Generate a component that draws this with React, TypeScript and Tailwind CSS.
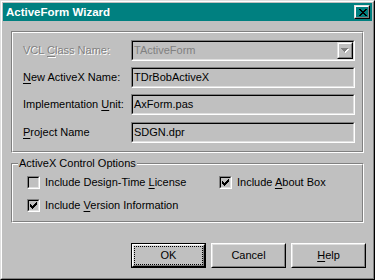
import React from "react";

function Sunken({ className = "", innerClassName = "", children }: { className?: string; innerClassName?: string; children?: React.ReactNode }) {
  return (
    <div className={`border border-t-[#808080] border-l-[#808080] border-b-white border-r-white ${className}`}>
      <div className={`h-full w-full border border-t-black border-l-black border-b-[#dfdfdf] border-r-[#dfdfdf] ${innerClassName}`}>{children}</div>
    </div>
  );
}

function Etched({ className = "", innerClassName = "", children }: { className?: string; innerClassName?: string; children?: React.ReactNode }) {
  return (
    <div className={`border border-t-[#808080] border-l-[#808080] border-b-white border-r-white ${className}`}>
      <div className={`h-full w-full border border-t-white border-l-white border-b-[#808080] border-r-[#808080] ${innerClassName}`}>{children}</div>
    </div>
  );
}

function U({ children }: { children: React.ReactNode }) {
  return <span className="underline decoration-1 underline-offset-[2px]">{children}</span>;
}

function Check() {
  const rows = ["......#", ".....##", "#...###", "##.###.", "#####..", ".###...", "..#...."];
  return (
    <svg width="7" height="7" viewBox="0 0 7 7" shapeRendering="crispEdges">
      {rows.flatMap((r, y) =>
        r.split("").map((c, x) => (c === "#" ? <rect key={`${x}-${y}`} x={x} y={y} width="1" height="1" fill="#000" /> : null))
      )}
    </svg>
  );
}

function CloseGlyph() {
  const rows = ["##....##", ".##..##.", "..####..", "...##...", "..####..", ".##..##.", "##....##"];
  return (
    <svg width="8" height="7" viewBox="0 0 8 7" shapeRendering="crispEdges">
      {rows.flatMap((r, y) =>
        r.split("").map((c, x) => (c === "#" ? <rect key={`${x}-${y}`} x={x} y={y} width="1" height="1" fill="#000" /> : null))
      )}
    </svg>
  );
}

function CheckBox({ checked, children }: { checked?: boolean; children: React.ReactNode }) {
  return (
    <div className="flex h-[13px] items-center gap-[5px]">
      <Sunken className="h-[13px] w-[13px] shrink-0" innerClassName="bg-[#c0c0c0] p-px">
        {checked ? <Check /> : null}
      </Sunken>
      <span className="whitespace-nowrap leading-[13px] text-black">{children}</span>
    </div>
  );
}

function Button({ def, children }: { def?: boolean; children: React.ReactNode }) {
  const bevel = (
    <div className="h-full w-full border border-t-white border-l-white border-b-black border-r-black">
      <div className="h-full w-full border border-t-[#dfdfdf] border-l-[#dfdfdf] border-b-[#808080] border-r-[#808080] p-px">
        <div className={`flex h-full w-full items-center justify-center border ${def ? "border-dotted border-black" : "border-transparent"}`}>
          <span className="leading-[13px]">{children}</span>
        </div>
      </div>
    </div>
  );
  return (
    <div className={`h-[25px] w-[75px] ${def ? "border border-black" : ""}`}>
      {def ? (
        <div className="h-full w-full border border-t-white border-l-white border-b-black border-r-black">
          <div className="h-full w-full border border-t-[#dfdfdf] border-l-[#dfdfdf] border-b-[#808080] border-r-[#808080]">
            <div className="flex h-full w-full items-center justify-center border border-dotted border-black">
              <span className="leading-[13px]">{children}</span>
            </div>
          </div>
        </div>
      ) : (
        bevel
      )}
    </div>
  );
}

function Row({ label, disabled, children, className = "" }: { label: React.ReactNode; disabled?: boolean; children: React.ReactNode; className?: string }) {
  return (
    <div className={`flex h-[21px] items-center ${className}`}>
      <div
        className={`w-[108px] shrink-0 whitespace-nowrap leading-[13px] ${
          disabled ? "text-[#808080] [text-shadow:1px_1px_0_#ffffff]" : "text-black"
        }`}
      >
        {label}
      </div>
      {children}
    </div>
  );
}

function Edit({ value }: { value: string }) {
  return (
    <Sunken className="h-[21px] w-[224px]" innerClassName="bg-[#c0c0c0] flex items-center pl-px">
      <span className="leading-[13px] text-black">{value}</span>
    </Sunken>
  );
}

export default function App() {
  return (
    <div className="h-[280px] w-[375px] select-none border border-t-[#dfdfdf] border-l-[#dfdfdf] border-b-black border-r-black bg-[#c0c0c0] font-['Liberation_Sans',Arial,sans-serif] text-[11px] text-black">
      <div className="flex h-full w-full flex-col border border-t-white border-l-white border-b-[#808080] border-r-[#808080] p-px">
        {/* Title bar */}
        <div className="flex h-[18px] shrink-0 items-center justify-between bg-[#008080] pl-[3px] pr-[2px]">
          <span className="text-[11.5px] font-bold leading-[14px] text-white">ActiveForm Wizard</span>
          <div className="h-[14px] w-[16px] border border-t-[#dfdfdf] border-l-[#dfdfdf] border-b-black border-r-black">
            <div className="flex h-full w-full items-center justify-center border border-t-white border-l-white border-b-[#808080] border-r-[#808080] pl-px">
              <CloseGlyph />
            </div>
          </div>
        </div>

        {/* Client */}
        <div className="flex flex-col px-[8px] pt-[10px]">
          <Etched className="h-[122px]" innerClassName="flex flex-col pl-[10px] pt-[7px]">
            <Row
              disabled
              label={
                <>
                  VCL <U>C</U>lass Name:
                </>
              }
            >
              <Sunken className="h-[21px] w-[224px]" innerClassName="bg-[#c0c0c0] flex items-stretch">
                <div className="flex flex-1 items-center pl-px">
                  <span className="leading-[13px] text-[#808080]">TActiveForm</span>
                </div>
                <div className="w-[16px] border border-t-[#dfdfdf] border-l-[#dfdfdf] border-b-black border-r-black">
                  <div className="flex h-full w-full items-center justify-center border border-t-white border-l-white border-b-[#808080] border-r-[#808080]">
                    <svg width="8" height="5" viewBox="0 0 8 5" shapeRendering="crispEdges">
                      <path d="M1 1h7v1H1zM2 2h5v1H2zM3 3h3v1H3zM4 4h1v1H4z" fill="#ffffff" />
                      <path d="M0 0h7v1H0zM1 1h5v1H1zM2 2h3v1H2zM3 3h1v1H3z" fill="#808080" />
                    </svg>
                  </div>
                </div>
              </Sunken>
            </Row>
            <Row
              className="mt-[6px]"
              label={
                <>
                  <U>N</U>ew ActiveX Name:
                </>
              }
            >
              <Edit value="TDrBobActiveX" />
            </Row>
            <Row
              className="mt-[6px]"
              label={
                <>
                  Implementation <U>U</U>nit:
                </>
              }
            >
              <Edit value="AxForm.pas" />
            </Row>
            <Row
              className="mt-[7px]"
              label={
                <>
                  <U>P</U>roject Name
                </>
              }
            >
              <Edit value="SDGN.dpr" />
            </Row>
          </Etched>

          <div className="relative mt-[10px]">
            <Etched className="h-[60px]" innerClassName="pl-[14px] pt-[11px]">
              <div className="grid grid-cols-[192px_1fr] gap-y-[10px]">
                <CheckBox>
                  Include Design-Time <U>L</U>icense
                </CheckBox>
                <CheckBox checked>
                  Include <U>A</U>bout Box
                </CheckBox>
                <CheckBox checked>
                  Include <U>V</U>ersion Information
                </CheckBox>
              </div>
            </Etched>
            <span className="absolute left-[7px] top-[-6px] bg-[#c0c0c0] px-px leading-[13px]">ActiveX Control Options</span>
          </div>
        </div>

        <div className="mt-[20px] flex justify-end gap-[5px] pr-[6px]">
          <Button def>OK</Button>
          <Button>Cancel</Button>
          <Button>
            <U>H</U>elp
          </Button>
        </div>
      </div>
    </div>
  );
}
